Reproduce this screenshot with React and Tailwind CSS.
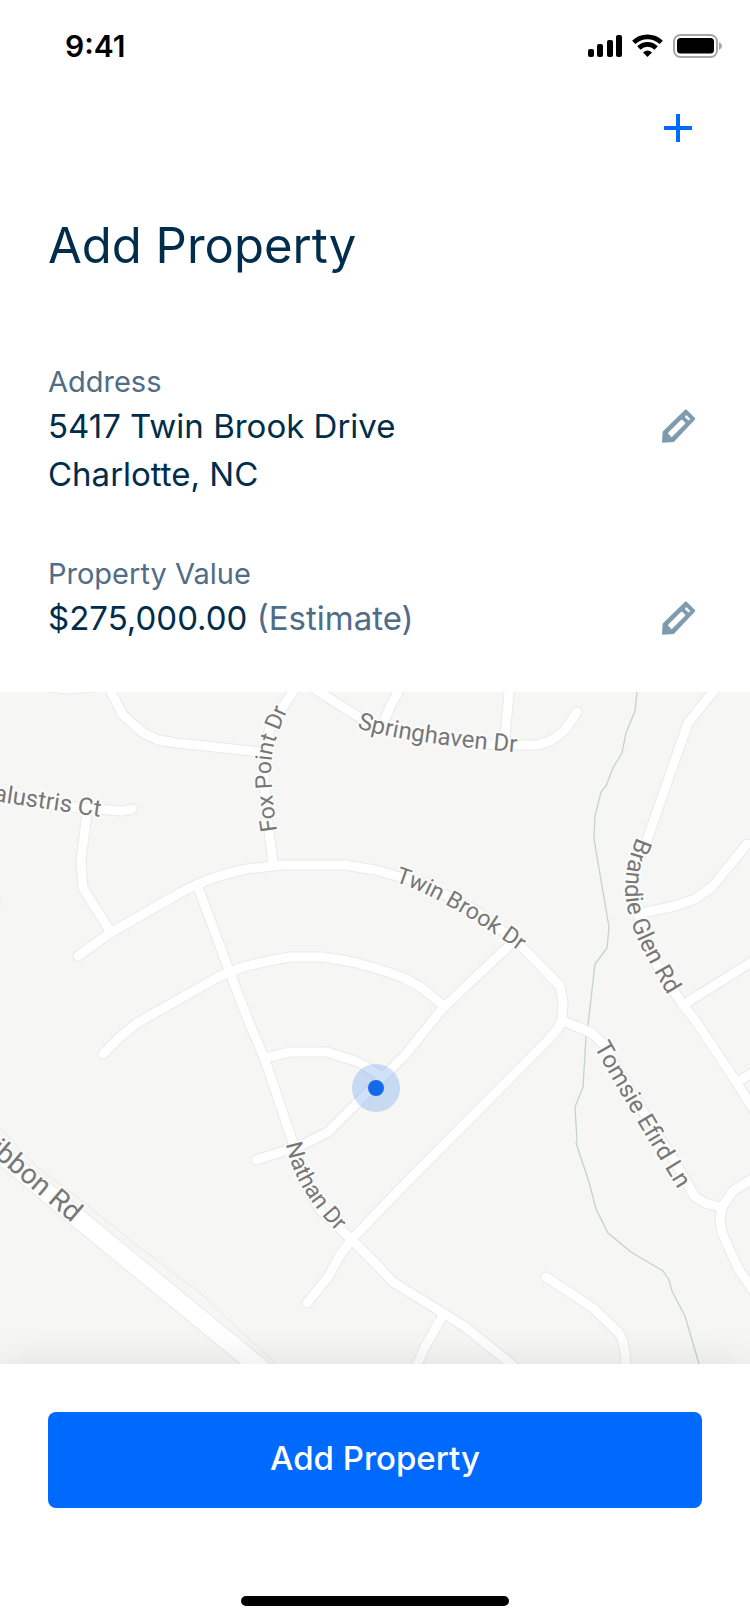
import React from "react";

// Street centre lines, in map units
const roads = [
  "M40 -6 L68 -3 L105 -6",
  "M107 -8 L111 0 L123 23 L142 40 L158 48 L177 51 L260 60",
  "M298 -8 L293 0 L283 15 L270 35 L265 60 L264 88 L268 131 L273 171",
  "M309 -8 L319 0 L362 27 L375 35 L420 45 L480 52 L518 53 L538 53 L552 48 L565 38 L577 20",
  "M402 -8 L398 0 L390 15 L380 38",
  "M510 -8 L509 0 L505 45",
  "M-8 105 L83 116 L122 119 L132 117",
  "M87 121 L81 168 L83 196 L110 239",
  "M78 264 L110 241 L180 201 L198 192 Q222 182 247 177 L282 173 L345 173 L375 178 L422 191 L475 218 L512 246 L525 258 L560 294 L563 310 L562 326 L559 335 L548 348 L402 495 L353 546 L340 563 L328 585 L307 611",
  "M198 195 L230 281 L248 328 L265 368 L293 451 L308 498 L320 518 L352 548 L375 571 L393 590 L443 621 L465 635 L515 675",
  "M443 623 L425 655 L416 675",
  "M103 362 L120 345 L137 331 L220 284 L243 275 L273 268 L290 265 L323 265 L353 270 L375 276 L402 285 L422 296 L445 315",
  "M512 251 L443 316 L405 363 L382 386 L328 440 L300 454 L256 468",
  "M265 366 L290 360 L327 360 L358 370 L380 383",
  "M562 329 L578 335 L592 341 L602 351 L642 418 L678 475 L695 505 L705 511 L720 515",
  "M758 483 L733 499 L722 515 L720 528 L722 541 L738 576 L758 606",
  "M719 -8 L713 0 L688 31 L647 148 L633 181 L633 205 L642 235 L658 275 L683 313 L695 328 L737 391 L758 425",
  "M642 221 L675 214 L695 207 L712 195 L747 152",
  "M683 313 L758 266",
  "M737 390 L758 377",
  "M546 585 L593 616 L618 640 Q626 650 626 678",
  "M-8 210 L-4 210",
];

const mainRoad = "M-20 445 L80 528 L275 688";

const creek =
  "M637 0 L635 19 L626 41 L622 61 L613 76 L606 94 L601 100 L595 124 L594 147 L609 235 L607 256 L595 272 L588 333 L586 345 L583 395 L575 415 L577 449 L576 451 L589 490 L596 517 L608 541 L631 560 L663 579 L669 588 L672 599 L685 624 L699 672";

const labels = [
  { id: "fox", text: "Fox Point Dr", d: "M277 139 Q268 80 273 58 Q276 42 296 0", size: "text-[23px]" },
  { id: "spring", text: "Springhaven Dr", d: "M357 36 Q405 52 540 62", size: "text-[24px]" },
  { id: "palustris", text: "Palustris Ct", d: "M-60 100 L0 110 L100 125", end: true, size: "text-[24px]" },
  { id: "twin", text: "Twin Brook Dr", d: "M395 190 Q450 207 545 278", size: "text-[23px]" },
  { id: "brandie", text: "Brandie Glen Rd", d: "M637 145 Q617 190 631 230 Q642 263 684 329", size: "text-[24px]" },
  { id: "tomsie", text: "Tomsie Efird Ln", d: "M594 355 Q628 415 687 512", size: "text-[24px]" },
  { id: "nathan", text: "Nathan Dr", d: "M286 452 Q296 505 355 557", size: "text-[23px]" },
  { id: "gibbon", text: "Gibbon Rd", d: "M-60 418 L72 531", end: true, size: "text-[28px]" },
];

function StatusBar() {
  return (
    <div className="flex h-[92px] items-center justify-between pr-7 pl-[65px]">
      <span className="text-[30px] leading-9 font-semibold text-black">9:41</span>
      <div className="flex items-center gap-[10px]">
        <svg width="34" height="24" viewBox="0 0 34 24">
          <rect x="0" y="15" width="6" height="8" rx="2" />
          <rect x="9" y="10" width="6" height="13" rx="2" />
          <rect x="19" y="6" width="6" height="17" rx="2" />
          <rect x="28" y="1" width="6" height="22" rx="2" />
        </svg>
        <svg width="31" height="24" viewBox="0 0 31 24" fill="none" stroke="#000" strokeWidth="4.8">
          <path d="M1.8 8.4 A19.5 19.5 0 0 1 29.2 8.4" />
          <path d="M6.9 14 A12.2 12.2 0 0 1 24.1 14" />
          <path d="M15.5 23 L11 18.4 Q15.5 14.6 20 18.4 Z" fill="#000" stroke="none" />
        </svg>
        <svg width="49" height="24" viewBox="0 0 49 24">
          <rect x="1" y="1" width="43" height="22" rx="6.5" fill="none" stroke="#a6a6a6" strokeWidth="2" />
          <rect x="4" y="4" width="37" height="15.6" rx="3.5" />
          <path d="M46 8 Q49 9.500 49 12 Q49 14.500 46 16 Z" fill="#a6a6a6" />
        </svg>
      </div>
    </div>
  );
}

function PencilIcon() {
  return (
    <svg width="34" height="34" viewBox="0 0 102 102">
      <path
        d="M6 98 L8 69 L75 4 L100 29 L37 96 Z"
        fill="#7f9bb0"
        stroke="#7f9bb0"
        strokeWidth="6"
        strokeLinejoin="round"
      />
      <path
        d="M23 73 L62 34 L71 43 L32 82 Z M74 23 L76 21 L85 30 L83 32 Z"
        fill="#fff"
        stroke="#fff"
        strokeWidth="4"
        strokeLinejoin="round"
      />
    </svg>
  );
}

function Field({ label, children }) {
  return (
    <div>
      <dt className="text-[29px] leading-10 text-[#4f6d86]">{label}</dt>
      <dd className="flex items-start justify-between text-[33px] leading-[48px] text-[#002d4b]">
        <div>{children}</div>
        <button
          type="button"
          aria-label={`Edit ${label}`}
          className="flex h-12 w-12 items-center justify-center"
        >
          <PencilIcon />
        </button>
      </dd>
    </div>
  );
}

function StreetMap() {
  return (
    <svg viewBox="0 0 750 672" className="block w-full bg-[#f6f6f5]">
      <path d={creek} fill="none" stroke="#c8d0d2" strokeWidth="1.3" />

      <g fill="none" strokeLinecap="round" strokeLinejoin="round">
        <path d="M-5 431 L0 436 L37 475 L90 515 L133 550 L200 601 L275 671" stroke="#e6eae8" />
        <g stroke="#e6ebe9" strokeWidth="11">
          {roads.map((d) => (
            <path key={d} d={d} />
          ))}
        </g>
        <path d={mainRoad} stroke="#e6ebe9" strokeWidth="20" />
        <g stroke="#fff" strokeWidth="9">
          {roads.map((d) => (
            <path key={d} d={d} />
          ))}
        </g>
        <path d={mainRoad} stroke="#fff" strokeWidth="18" />
      </g>

      <g
        className="font-['Roboto',sans-serif]"
        fill="#777"
        stroke="#fbfbfa"
        strokeWidth="4"
        strokeLinejoin="round"
        paintOrder="stroke"
      >
        {labels.map((l) => (
          <React.Fragment key={l.id}>
            <path id={l.id} d={l.d} fill="none" stroke="none" />
            <text textAnchor={l.end ? "end" : "start"} className={l.size}>
              <textPath href={`#${l.id}`} startOffset={l.end ? "100%" : "0"}>
                {l.text}
              </textPath>
            </text>
          </React.Fragment>
        ))}
      </g>

      {/* Property pin */}
      <circle cx="376" cy="396" r="24" fill="#136ae8" fillOpacity="0.2" />
      <circle cx="376" cy="396" r="8" fill="#136ae8" />
    </svg>
  );
}

export default function AddProperty() {
  return (
    <div className="flex min-h-screen flex-col bg-white font-['Inter',sans-serif]">
      <StatusBar />

      <div className="flex h-[72px] items-center justify-end px-12">
        <button type="button" aria-label="Add" className="flex h-12 w-12 items-center justify-center">
          <svg width="28" height="28" viewBox="0 0 28 28" stroke="#006aff" strokeWidth="4">
            <path d="M14 0 V28 M0 14 H28" />
          </svg>
        </button>
      </div>

      <main>
        <div className="px-12 pt-[52px] pb-[50px]">
          <h1 className="text-[49px] leading-[60px] font-normal text-[#002d4b]">Add Property</h1>
          <dl className="mt-[86px] flex flex-col gap-14">
            <Field label="Address">
              5417 Twin Brook Drive
              <br />
              Charlotte, NC
            </Field>
            <Field label="Property Value">
              $275,000.00 <span className="text-[#4f6d86]">(Estimate)</span>
            </Field>
          </dl>
        </div>
        <StreetMap />
      </main>

      <footer className="relative flex flex-1 flex-col items-center justify-between bg-white px-12 pt-12 pb-[18px] shadow-[0_0_40px_rgba(0,0,0,0.1)]">
        <button
          type="button"
          className="h-24 w-full rounded-lg bg-[#006aff] pb-1 text-[33px] leading-[48px] font-medium text-white"
        >
          Add Property
        </button>
        <div className="mt-20 h-[10px] w-[268px] rounded-full bg-black" />
      </footer>
    </div>
  );
}
